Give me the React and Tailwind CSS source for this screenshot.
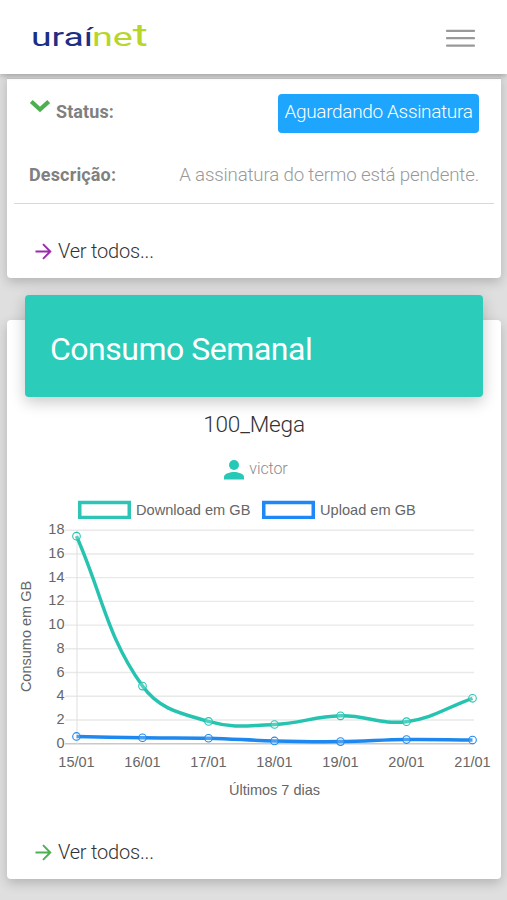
import React from 'react';

const days = ['15/01', '16/01', '17/01', '18/01', '19/01', '20/01', '21/01'];
const ticks = [18, 16, 14, 12, 10, 8, 6, 4, 2, 0];

const series = [
  { name: 'Upload em GB', color: '#1e88ee', data: [0.61, 0.5, 0.46, 0.23, 0.18, 0.35, 0.31] },
  { name: 'Download em GB', color: '#26c4b0', data: [17.5, 4.86, 1.88, 1.62, 2.35, 1.86, 3.83] },
];

const toX = (i) => 69.5 + i * 66;
const toY = (v) => 218.7 - v * 11.86;

// Smooth line with tension 0.4
const buildPath = (data) => {
  const pts = data.map((v, i) => ({ x: toX(i), y: toY(v) }));
  const ctrl = pts.map((p, i) => {
    const prev = pts[i - 1] || p;
    const next = pts[i + 1] || p;
    const d01 = Math.hypot(p.x - prev.x, p.y - prev.y);
    const d12 = Math.hypot(next.x - p.x, next.y - p.y);
    const fa = (0.4 * d01) / (d01 + d12);
    const fb = (0.4 * d12) / (d01 + d12);
    return {
      inX: p.x - fa * (next.x - prev.x),
      inY: p.y - fa * (next.y - prev.y),
      outX: p.x + fb * (next.x - prev.x),
      outY: p.y + fb * (next.y - prev.y),
    };
  });
  return pts.reduce((d, p, i) => {
    if (i === 0) return `M${p.x} ${p.y}`;
    const a = ctrl[i - 1];
    const b = ctrl[i];
    return `${d} C${a.outX} ${a.outY} ${b.inX} ${b.inY} ${p.x} ${p.y}`;
  }, '');
};

const Logo = () => (
  <svg width="124" height="50" viewBox="0 -8 124 50" className="overflow-visible font-['Roboto',sans-serif] text-[26px]">
    <text x="-1" y="26.3" textLength="62" lengthAdjust="spacingAndGlyphs" fill="#1b2f85">uraí</text>
    <text x="60" y="26.3" textLength="56" lengthAdjust="spacingAndGlyphs" fill="#b9d52a">
      ne<tspan fontSize="32">t</tspan>
    </text>
  </svg>
);

const Header = () => (
  <header className="relative z-10 flex h-[74px] shrink-0 items-center justify-between bg-white pl-8 pr-8 shadow-[0_2px_5px_rgba(0,0,0,0.22)]">
    <Logo />
    <button aria-label="Menu">
      <svg width="29" height="19" viewBox="0 0 29 19" className="block" stroke="#999" strokeWidth="2.3" strokeLinecap="round">
        <path d="M1 2.8H28M1 10.2H28M1 17.6H28" />
      </svg>
    </button>
  </header>
);

const SeeAll = ({ color }) => (
  <a className="flex items-center gap-1.5 text-[20px] leading-6 font-light tracking-[-0.2px] text-[#333]">
    <svg width="17" height="17" viewBox="0 0 17 17" fill="none" stroke={color} strokeWidth="1.9">
      <path d="M0.5 8.5H15M8 1.2L15.3 8.5L8 15.8" />
    </svg>
    Ver todos...
  </a>
);

const StatusCard = () => (
  <section className="h-[204px] rounded-b bg-white px-[7px] shadow-[0_4px_12px_rgba(0,0,0,0.2)]">
    <div className="-mx-[7px] h-[5px] border-b border-[#c4c4c4] bg-[#d3d3d3]" />
    <div className="flex h-[68px] items-start justify-between px-[15px] pt-[15px]">
      <div className="flex items-start gap-1.5">
        <svg width="21" height="14" viewBox="0 0 21 14" className="mt-[5px]" fill="none" stroke="#4caf50" strokeWidth="4.2">
          <path d="M2.3 2.5L11 10.5L19.7 2.5" />
        </svg>
        <span className="mt-1.5 text-[18px] leading-6 font-bold tracking-[0.1px] text-[#808080]">Status:</span>
      </div>
      <span className="flex h-[39px] w-[201px] items-center justify-center rounded bg-[#1ea5fd] pb-0.5 text-[19px] font-light tracking-[-0.34px] whitespace-nowrap text-white">
        Aguardando Assinatura
      </span>
    </div>
    <div className="flex h-[57px] items-center justify-between border-b border-[#d8d8d8] px-[15px]">
      <span className="pb-0.5 text-[18px] font-bold tracking-[0.15px] text-[#808080]">Descrição:</span>
      <span className="text-[18.7px] font-light tracking-[-0.17px] text-[#999]">A assinatura do termo está pendente.</span>
    </div>
    <div className="mt-[35px] ml-[21px]">
      <SeeAll color="#9c27b0" />
    </div>
  </section>
);

const Swatch = ({ color }) => (
  <svg width="53" height="19" viewBox="0 0 53 19" className="shrink-0" fill="none">
    <rect x="1.75" y="2.5" width="49.5" height="15" stroke={color} strokeWidth="3.5" />
  </svg>
);

const Legend = () => (
  <div className="ml-[71px] flex items-center gap-[11px] font-['Liberation_Sans',sans-serif] text-[14.6px] leading-[18px] text-[#666]">
    <div className="flex w-[173px] items-center gap-[5px] whitespace-nowrap">
      <Swatch color="#2ec4b6" />
      Download em GB
    </div>
    <div className="flex items-center gap-[5px] whitespace-nowrap">
      <Swatch color="#1e88f7" />
      Upload em GB
    </div>
  </div>
);

const Chart = () => (
  <svg width="494" height="286" viewBox="0 -6 494 286" className="block font-['Liberation_Sans',sans-serif] text-[14.5px]">
    {ticks.map((t) => (
      <line key={t} x1="58" x2="467" y1={toY(t)} y2={toY(t)} stroke={t === 0 ? '#c9c9c9' : '#e9e9e9'} strokeWidth="1.4" />
    ))}
    <line x1="70" x2="70" y1="5" y2="219" stroke="#dfdfdf" strokeWidth="1" />
    {ticks.map((t) => (
      <text key={t} x="57.5" y={toY(t) + 4} textAnchor="end" fill="#666">{t}</text>
    ))}
    {series.map((s) => (
      <path key={s.name} d={buildPath(s.data)} fill="none" stroke={s.color} strokeWidth="3.5" />
    ))}
    {series.map((s) =>
      s.data.map((v, i) => (
        <circle key={`${s.name}-${i}`} cx={toX(i)} cy={toY(v)} r="3.8" fill="rgba(255,255,255,0.2)" stroke={s.color} strokeWidth="1.1" />
      ))
    )}
    {days.map((d, i) => (
      <text key={d} x={toX(i)} y="242" textAnchor="middle" fill="#666">{d}</text>
    ))}
    <text x="267.5" y="269.5" textAnchor="middle" fill="#666">Últimos 7 dias</text>
    <text transform="translate(24 111.5) rotate(-90)" textAnchor="middle" fill="#666">Consumo em GB</text>
  </svg>
);

const UsageCard = () => (
  <section className="mt-[42px] h-[559px] rounded bg-white shadow-[0_4px_12px_rgba(0,0,0,0.2)]">
    <div className="relative -top-[25px] mx-[18px] flex h-[102px] items-center rounded bg-[#2cccba] px-[25px] pt-[5px] shadow-[0_5px_15px_rgba(0,0,0,0.22)]">
      <h2 className="text-[32px] leading-10 tracking-[-0.48px] text-white">Consumo Semanal</h2>
    </div>
    <div className="-mt-[13px] flex flex-col items-center">
      <h3 className="text-[22.6px] leading-8 font-light tracking-[-0.2px] text-[#333]">100_Mega</h3>
      <div className="mt-3.5 ml-[3px] flex h-[25px] items-center gap-1 text-[16px] font-light tracking-[-0.1px] text-[#8c8c8c]">
        <svg width="22" height="22" viewBox="0 0 22 22" className="mt-1" fill="#26c9b5">
          <circle cx="11" cy="6" r="5" />
          <path d="M1 20.5V17.8C1 14.6 7.6 13 11 13S21 14.6 21 17.8V20.5Z" />
        </svg>
        <span className="mt-0.5">victor</span>
      </div>
    </div>
    <div className="mt-5">
      <Legend />
    </div>
    <Chart />
    <div className="mt-[35px] ml-[28px]">
      <SeeAll color="#4caf50" />
    </div>
  </section>
);

export default function App() {
  return (
    <div className="flex h-[900px] w-[507px] flex-col overflow-hidden bg-[#dfdfdf] font-['Roboto',sans-serif]">
      <Header />
      <main className="ml-[7px] w-[494px]">
        <StatusCard />
        <UsageCard />
      </main>
    </div>
  );
}
